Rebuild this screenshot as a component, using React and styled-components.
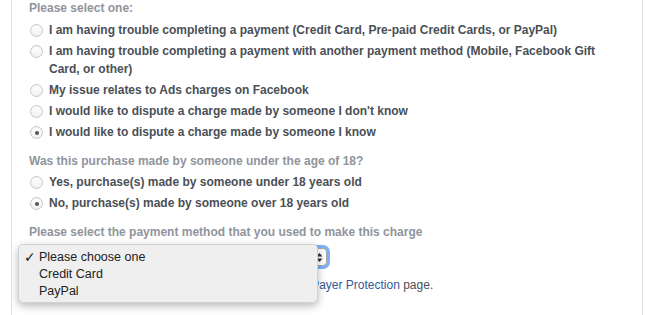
import styled, { createGlobalStyle } from 'styled-components';

const GlobalStyle = createGlobalStyle`
    html, body {
        margin: 0;
        padding: 0;
        background: #fff;
    }
    body {
        font-family: 'Liberation Sans', Helvetica, Arial, sans-serif;
        font-size: 12px;
        color: #4b4f56;
    }
`;

const Panel = styled.div`
    margin-left: 11px;
    width: 596px;
    height: 315px;
    overflow: hidden;
    border-left: 1px solid #dddfe2;
    border-right: 1px solid #dddfe2;
    padding: 0 17px;
`;

const Heading = styled.div`
    font-weight: bold;
    color: #90949c;
    line-height: 16px;
    margin-bottom: ${(p) => p.$bottom ?? 8}px;
`;

const Group = styled.div`
    margin-bottom: ${(p) => p.$bottom || 0}px;
`;

const Row = styled.label`
    display: flex;
    align-items: flex-start;
    gap: 6px;
    padding-left: 1px;
    margin-bottom: 3px;
    font-weight: bold;
    line-height: 18px;
    color: #4b4f56;
`;

const Radio = styled.span`
    flex: none;
    width: 11px;
    height: 11px;
    margin-top: 3px;
    border-radius: 50%;
    border: 1px solid #c8c8c8;
    background: linear-gradient(#ffffff, #f1f1f1);
    box-shadow: inset 0 1px 1px rgba(0, 0, 0, 0.04);
    display: flex;
    align-items: center;
    justify-content: center;

    &::after {
        content: '';
        width: 4px;
        height: 4px;
        border-radius: 50%;
        background: ${(p) => (p.$checked ? '#555' : 'transparent')};
    }
`;

const SelectWrap = styled.div`
    position: relative;
    width: 298px;
    margin-top: 7px;
`;

const SelectBox = styled.div`
    height: 16px;
    border: 1px solid #a9a9a9;
    border-radius: 4px;
    background: #fff;
    box-shadow: 0 0 0 3px #7fb0f4;
    display: flex;
    align-items: center;
    justify-content: flex-end;
    padding-right: 3px;
`;

const Menu = styled.ul`
    position: absolute;
    top: -4px;
    left: -11px;
    width: 300px;
    margin: 0;
    padding: 4px 0 5px;
    list-style: none;
    box-sizing: border-box;
    height: 59px;
    background: #efefef;
    border: 1px solid rgba(0, 0, 0, 0.12);
    border-radius: 5px;
    box-shadow: 0 3px 9px rgba(0, 0, 0, 0.28);
    font-family: 'Liberation Sans', Helvetica, Arial, sans-serif;
    font-size: 12.5px;
    color: #222;
    z-index: 2;
`;

const MenuItem = styled.li`
    position: relative;
    line-height: 17px;
    padding-left: 20px;
`;

const Check = styled.span`
    position: absolute;
    left: 5px;
    top: 0;
    font-family: 'DejaVu Sans', sans-serif;
    font-size: 14px;
`;

const Note = styled.div`
    margin-top: 10px;
    line-height: 18px;
    color: #4b4f56;
`;

const Link = styled.a`
    color: #365899;
    text-decoration: none;
`;

const Arrows = () => (
    <svg width="7" height="11" viewBox="0 0 7 11">
        <path d="M3.5 1 L6.5 4.5 L0.5 4.5 Z" fill="#333" />
        <path d="M3.5 10 L6.5 6.5 L0.5 6.5 Z" fill="#333" />
    </svg>
);

const issues = [
    'I am having trouble completing a payment (Credit Card, Pre-paid Credit Cards, or PayPal)',
    'I am having trouble completing a payment with another payment method (Mobile, Facebook Gift Card, or other)',
    'My issue relates to Ads charges on Facebook',
    "I would like to dispute a charge made by someone I don't know",
    'I would like to dispute a charge made by someone I know',
];

const ages = [
    'Yes, purchase(s) made by someone under 18 years old',
    'No, purchase(s) made by someone over 18 years old',
];

const App = () => {
    return (
        <>
            <GlobalStyle />
            <Panel>
                <Heading $bottom={5}>Please select one:</Heading>
                <Group $bottom={12}>
                    {issues.map((text, i) => (
                        <Row key={text}>
                            <Radio $checked={i === 4} />
                            <span>{text}</span>
                        </Row>
                    ))}
                </Group>

                <Heading $bottom={4}>Was this purchase made by someone under the age of 18?</Heading>
                <Group $bottom={12}>
                    {ages.map((text, i) => (
                        <Row key={text}>
                            <Radio $checked={i === 1} />
                            <span>{text}</span>
                        </Row>
                    ))}
                </Group>

                <Heading>Please select the payment method that you used to make this charge</Heading>
                <SelectWrap>
                    <SelectBox>
                        <Arrows />
                    </SelectBox>
                    <Menu>
                        <MenuItem>
                            <Check>✓</Check>Please choose one
                        </MenuItem>
                        <MenuItem>Credit Card</MenuItem>
                        <MenuItem>PayPal</MenuItem>
                    </Menu>
                </SelectWrap>
                <Note>
                    For more information about disputes, please visit the <Link href="#">Payer Protection</Link> page.
                </Note>
            </Panel>
        </>
    );
};

export default App;
